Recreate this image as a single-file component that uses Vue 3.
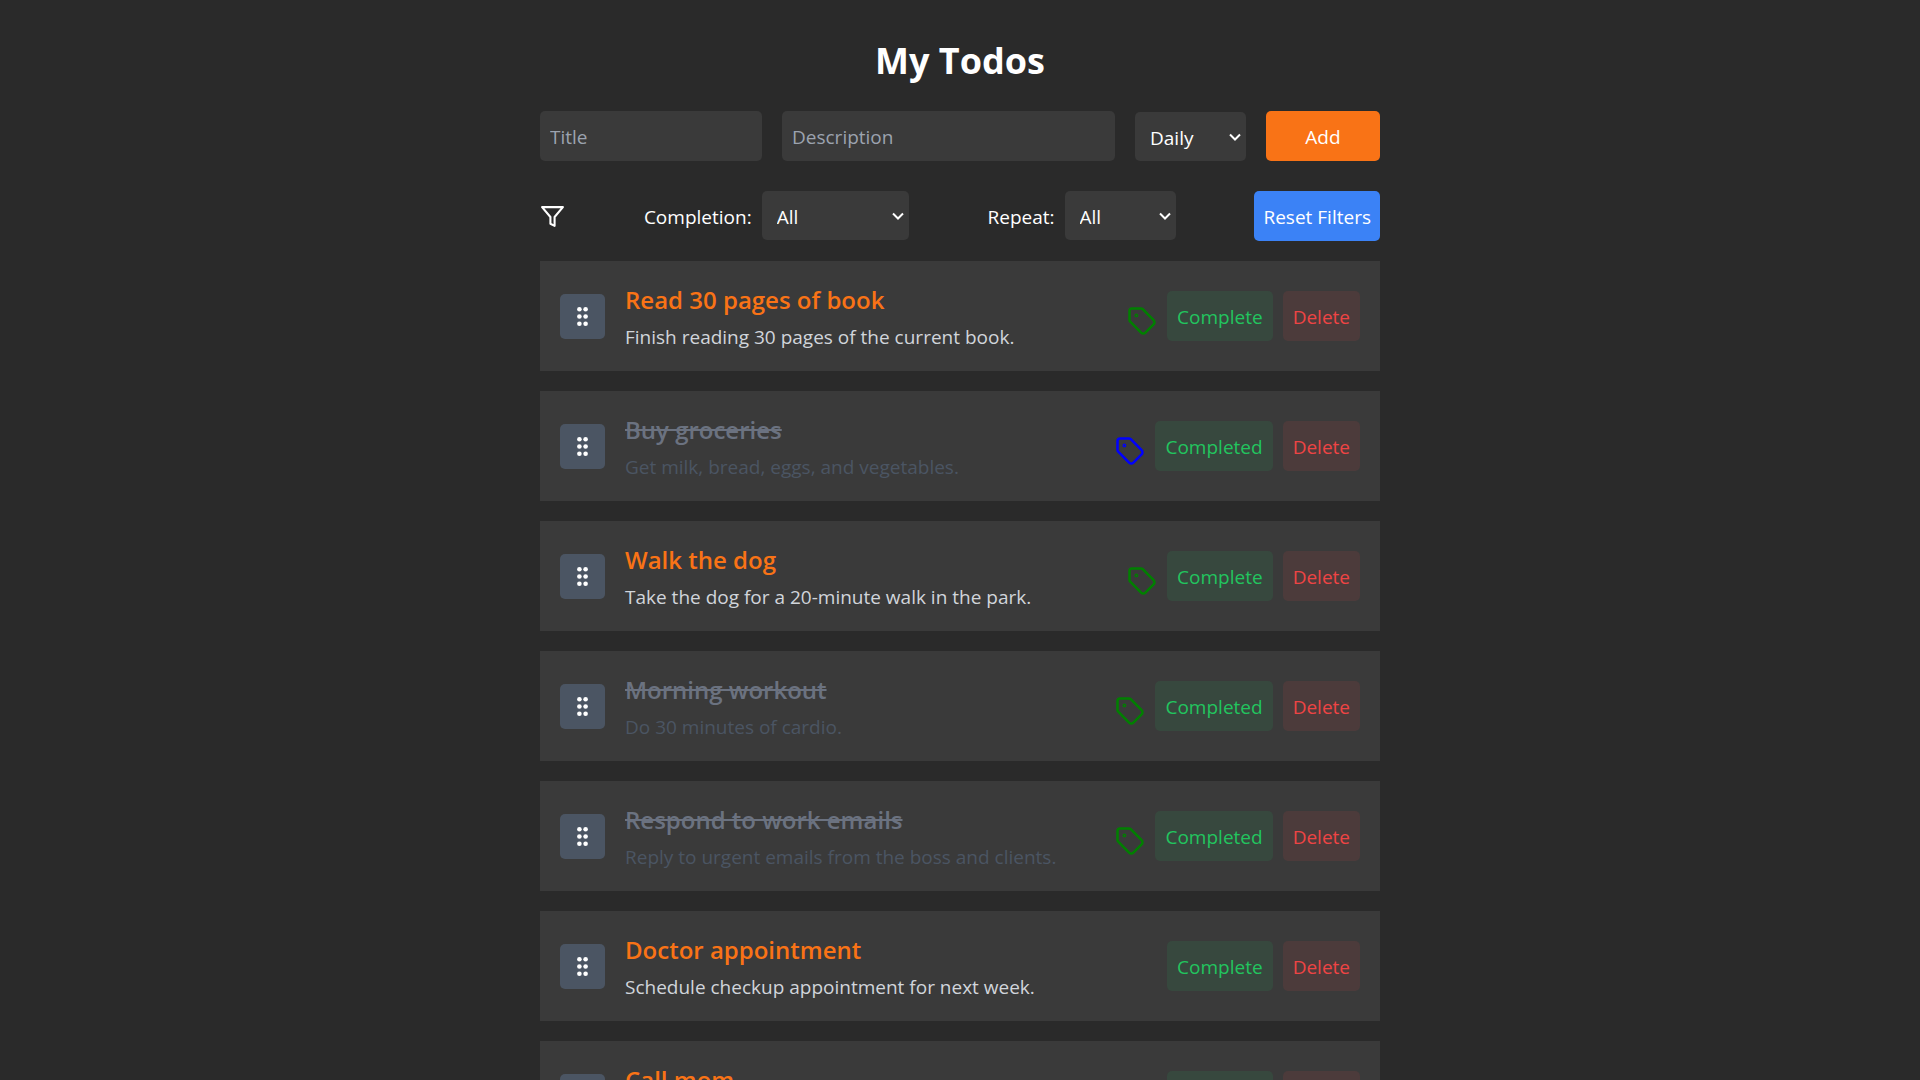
<template>
  <main class="page">
    <h1 class="heading">My Todos</h1>

    <form class="add-form" @submit.prevent="addTodo">
      <input v-model="form.title" class="field" type="text" placeholder="Title" aria-label="Title" />
      <input v-model="form.description" class="field" type="text" placeholder="Description" aria-label="Description" />
      <div class="select-wrap">
        <select v-model="form.repeat" class="select" aria-label="Repeat">
          <option value="daily">Daily</option>
          <option value="weekly">Weekly</option>
          <option value="monthly">Monthly</option>
        </select>
        <svg class="chevron" viewBox="0 0 12 8"><path d="M1 1.5l5 5 5-5" /></svg>
      </div>
      <button class="btn btn-add" type="submit">Add</button>
    </form>

    <div class="filters">
      <svg class="filter-icon" viewBox="0 0 24 24">
        <polygon points="22 3 2 3 10 12.46 10 19 14 21 14 12.46 22 3" />
      </svg>
      <div class="filter-group">
        <label class="filter-label" for="completion">Completion:</label>
        <div class="select-wrap select-wide">
          <select id="completion" v-model="completion" class="select">
            <option value="all">All</option>
            <option value="completed">Completed</option>
            <option value="open">Incomplete</option>
          </select>
          <svg class="chevron" viewBox="0 0 12 8"><path d="M1 1.5l5 5 5-5" /></svg>
        </div>
      </div>
      <div class="filter-group">
        <label class="filter-label" for="repeat">Repeat:</label>
        <div class="select-wrap">
          <select id="repeat" v-model="repeat" class="select">
            <option value="all">All</option>
            <option value="daily">Daily</option>
            <option value="weekly">Weekly</option>
            <option value="monthly">Monthly</option>
          </select>
          <svg class="chevron" viewBox="0 0 12 8"><path d="M1 1.5l5 5 5-5" /></svg>
        </div>
      </div>
      <button class="btn btn-reset" type="button" @click="resetFilters">Reset Filters</button>
    </div>

    <ul class="list">
      <li v-for="todo in visibleTodos" :key="todo.id" class="card" :class="{ done: todo.done }">
        <button class="handle" type="button" aria-label="Reorder">
          <svg class="grip" viewBox="0 0 25 25">
            <circle cx="9.4" cy="5.3" r="2.3" />
            <circle cx="15.6" cy="5.3" r="2.3" />
            <circle cx="9.4" cy="12.5" r="2.3" />
            <circle cx="15.6" cy="12.5" r="2.3" />
            <circle cx="9.4" cy="19.7" r="2.3" />
            <circle cx="15.6" cy="19.7" r="2.3" />
          </svg>
        </button>
        <div class="card-text">
          <h2 class="card-title">{{ todo.title }}</h2>
          <p class="card-desc">{{ todo.description }}</p>
        </div>
        <div class="actions">
          <span v-if="todo.tag" class="tag" :class="'tag-' + todo.tag">
            <svg viewBox="0 0 24 24">
              <path d="M12.586 2.586A2 2 0 0 0 11.172 2H4a2 2 0 0 0-2 2v7.172a2 2 0 0 0 .586 1.414l8.704 8.704a2.426 2.426 0 0 0 3.42 0l6.58-6.58a2.426 2.426 0 0 0 0-3.42z" />
              <circle cx="7.5" cy="7.5" r=".5" />
            </svg>
          </span>
          <button class="btn btn-complete" type="button" @click="todo.done = !todo.done">
            {{ todo.done ? 'Completed' : 'Complete' }}
          </button>
          <button class="btn btn-delete" type="button" @click="removeTodo(todo.id)">Delete</button>
        </div>
      </li>
    </ul>
  </main>
</template>

<script setup>
import { computed, ref } from 'vue'

const form = ref({ title: '', description: '', repeat: 'daily' })
const completion = ref('all')
const repeat = ref('all')

const todos = ref([
  { id: 1, title: 'Read 30 pages of book', description: 'Finish reading 30 pages of the current book.', tag: 'daily', done: false },
  { id: 2, title: 'Buy groceries', description: 'Get milk, bread, eggs, and vegetables.', tag: 'weekly', done: true },
  { id: 3, title: 'Walk the dog', description: 'Take the dog for a 20-minute walk in the park.', tag: 'daily', done: false },
  { id: 4, title: 'Morning workout', description: 'Do 30 minutes of cardio.', tag: 'daily', done: true },
  { id: 5, title: 'Respond to work emails', description: 'Reply to urgent emails from the boss and clients.', tag: 'daily', done: true },
  { id: 6, title: 'Doctor appointment', description: 'Schedule checkup appointment for next week.', tag: null, done: false },
  { id: 7, title: 'Call mom', description: 'Catch up over the phone.', tag: null, done: false },
])

const visibleTodos = computed(() =>
  todos.value.filter((t) => {
    if (completion.value !== 'all' && t.done !== (completion.value === 'completed')) return false
    return repeat.value === 'all' || t.tag === repeat.value
  })
)

function addTodo() {
  if (!form.value.title.trim()) return
  todos.value.push({
    id: Date.now(),
    title: form.value.title,
    description: form.value.description,
    tag: form.value.repeat,
    done: false,
  })
  form.value = { title: '', description: '', repeat: 'daily' }
}

function removeTodo(id) {
  todos.value = todos.value.filter((t) => t.id !== id)
}

function resetFilters() {
  completion.value = 'all'
  repeat.value = 'all'
}
</script>

<style>
body {
  margin: 0;
  background: #2a2a2a;
}
</style>

<style scoped>
* { box-sizing: border-box; }

.page {
  max-width: 880px;
  margin: 0 auto;
  padding: 38px 20px;
  color: #fff;
  font-family: 'Segoe UI', 'Open Sans', 'Noto Sans', sans-serif;
  font-size: 19px;
  line-height: 30px;
}

.heading {
  margin: 0 0 28px;
  font-size: 36px;
  font-weight: 700;
  line-height: 45px;
  text-align: center;
}

.add-form {
  display: grid;
  grid-template-columns: 2fr 3fr auto auto;
  align-items: end;
  gap: 20px;
  margin-bottom: 30px;
}

.field {
  width: 100%;
  min-width: 0;
  height: 50px;
  padding: 11px 10px 9px;
  border: none;
  border-radius: 5px;
  background: #3a3a3a;
  color: #fff;
  font: inherit;
}
.field::placeholder { color: #9ca3af; opacity: 1; }

.select-wrap { position: relative; width: 111px; }
.select-wide { width: 147px; }

.select {
  display: block;
  width: 100%;
  height: 49px;
  padding: 10px 30px 8px 15px;
  border: none;
  border-radius: 5px;
  background: #3a3a3a;
  color: #fff;
  font: inherit;
  appearance: none;
}

.chevron {
  position: absolute;
  top: 21px;
  right: 5px;
  width: 12px;
  height: 8px;
  fill: none;
  stroke: #fff;
  stroke-width: 2;
  pointer-events: none;
}

.btn {
  height: 50px;
  padding: 11px 10px 9px;
  border: none;
  border-radius: 5px;
  color: #fff;
  font: inherit;
  white-space: nowrap;
  cursor: pointer;
}
.btn-add { width: 114px; background: #f97316; }
.btn-reset { padding-inline: 9px; background: #3b82f6; }
.btn-complete { background: rgba(34, 197, 94, .1); color: #22c55e; }
.btn-delete { background: rgba(239, 68, 68, .1); color: #ef4444; }

.filters {
  display: flex;
  align-items: center;
  justify-content: space-between;
  margin-bottom: 20px;
}
.filter-icon {
  width: 25px;
  height: 25px;
  fill: none;
  stroke: #fff;
  stroke-width: 2;
  stroke-linecap: round;
  stroke-linejoin: round;
}
.filter-group {
  display: flex;
  align-items: center;
  align-self: flex-start;
  gap: 10px;
}
.filter-label { padding-top: 2px; }

.list {
  display: flex;
  flex-direction: column;
  gap: 20px;
  margin: 0;
  padding: 0;
  list-style: none;
}

.card {
  display: flex;
  align-items: center;
  gap: 20px;
  padding: 20px;
  background: #3a3a3a;
}

.handle {
  display: flex;
  align-items: center;
  justify-content: center;
  flex: none;
  width: 45px;
  height: 45px;
  padding: 0;
  border: none;
  border-radius: 5px;
  background: #4b5563;
  cursor: grab;
}
.grip { width: 25px; height: 25px; fill: #fff; }

.card-text { flex: 1; min-width: 0; }
.card-title {
  margin: 0 0 5px;
  color: #f97316;
  font-size: 24px;
  font-weight: 600;
  line-height: 37px;
}
.card-desc { margin: 0; color: #d1d5db; line-height: 28px; }
.done .card-title { color: #6b7280; text-decoration: line-through; }
.done .card-desc { color: #4b5563; }

.actions { display: flex; align-items: center; gap: 10px; }
.tag { padding-top: 10px; }
.tag svg {
  display: block;
  width: 30px;
  height: 30px;
  fill: none;
  stroke: currentColor;
  stroke-width: 2;
  stroke-linecap: round;
  stroke-linejoin: round;
}
.tag-daily { color: green; }
.tag-weekly { color: blue; }
</style>
